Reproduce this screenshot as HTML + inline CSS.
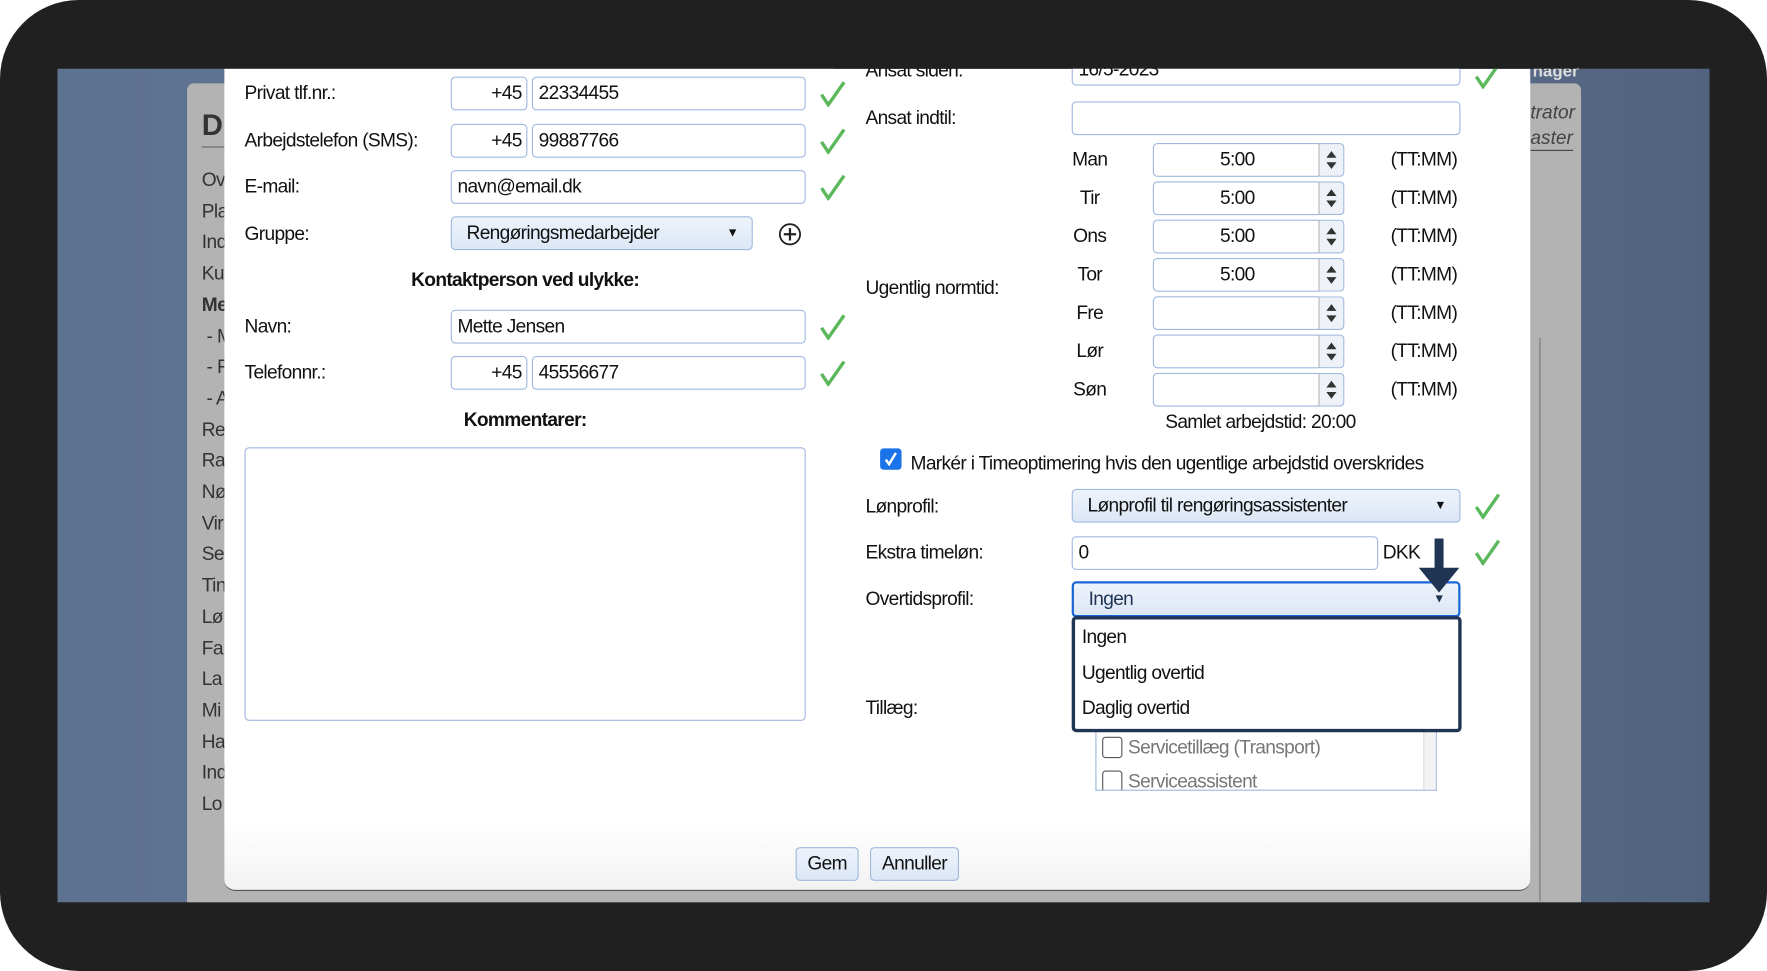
<!DOCTYPE html>
<html><head><meta charset="utf-8"><style>
*{box-sizing:border-box;margin:0;padding:0}
html,body{width:1767px;height:971px;overflow:hidden;background:#fff}
#w{position:absolute;left:0;top:0;width:1568px;height:862px;transform:scale(1.12691,1.12645);transform-origin:0 0;font-family:"Liberation Sans",sans-serif;color:#111}
.a{position:absolute}
.t{position:absolute;font-size:17px;line-height:20px;letter-spacing:-.6px;white-space:nowrap}
.in{position:absolute;height:30px;border:1px solid #9fb8e0;border-radius:4px;background:#fff;font-size:17px;letter-spacing:-.6px;line-height:28px;padding-left:5px;white-space:nowrap}
.sel{background:linear-gradient(#eef3fb,#dce7f6)}
.ck{position:absolute;width:24px;height:24px}
.sp{position:absolute;width:23px;height:30px;border:1px solid #9fb8e0;border-left:1px solid #b0b0b0;border-radius:0 4px 4px 0;background:#eef2f8}
.g{position:absolute;font-size:17px;color:#333;letter-spacing:-.5px}
</style></head><body><div id="w">
<div class="a" style="left:0;top:0;width:1568px;height:862px;background:#202020;border-radius:70px"></div>
<div class="a" style="left:51px;top:61px;width:1466px;height:740px;background:linear-gradient(90deg,#5d7190,#627895 50%,#52637f)"></div>
<div class="a" style="left:166px;top:74px;width:1237px;height:727px;background:#b3b3b3;border-radius:6px 6px 0 0"></div>
<div class="a" style="left:179px;top:96px;font-size:26px;font-weight:bold;color:#333">D</div>
<div class="a" style="left:179px;top:130px;width:20px;border-top:1px solid #666"></div>
<div class="g" style="left:179px;top:146px;line-height:27.7px">Ov<br>Pla<br>Ind<br>Ku<br><b>Me</b><br>&nbsp;- M<br>&nbsp;- F<br>&nbsp;- A<br>Re<br>Ra<br>Nø<br>Vir<br>Se<br>Tin<br>Lø<br>Fa<br>La<br>Mi<br>Ha<br>Ind<br>Lo</div>
<div class="a" style="left:1360px;top:55px;font-size:15px;font-weight:bold;color:#ddd">nager</div>
<div class="a" style="left:1358px;top:90px;font-size:17px;font-style:italic;color:#444">trator</div>
<div class="a" style="left:1358px;top:113px;font-size:17px;font-style:italic;color:#444;border-bottom:1px solid #444">aster</div>
<div class="a" style="left:1366px;top:300px;width:1px;height:500px;background:#777"></div>
<div class="a" style="left:199px;top:61px;width:1159px;height:730px;background:linear-gradient(#fff 92%,#f2f2f2);border-radius:0 0 10px 10px;border-bottom:1px solid #555"></div>
<div class="t" style="left:217px;top:73px">Privat tlf.nr.:</div>
<div class="in" style="left:400px;top:68px;width:68px;text-align:right;padding-right:4px">+45</div>
<div class="in" style="left:472px;top:68px;width:243px">22334455</div>
<div class="t" style="left:217px;top:115px">Arbejdstelefon (SMS):</div>
<div class="in" style="left:400px;top:110px;width:68px;text-align:right;padding-right:4px">+45</div>
<div class="in" style="left:472px;top:110px;width:243px">99887766</div>
<div class="t" style="left:217px;top:156px">E-mail:</div>
<div class="in" style="left:400px;top:151px;width:315px">navn@email.dk</div>
<div class="t" style="left:217px;top:198px">Gruppe:</div>
<div class="in sel" style="left:400px;top:192px;width:268px;padding-left:13px">Rengøringsmedarbejder<span style="position:absolute;right:12px;top:0;font-size:11px">▼</span></div>
<svg class="a" style="left:690px;top:197px" width="22" height="22"><circle cx="11" cy="11" r="9" fill="none" stroke="#222" stroke-width="1.6"/><path d="M11 5.5v11M5.5 11h11" stroke="#222" stroke-width="2"/></svg>
<div class="t" style="left:217px;top:239px;width:498px;text-align:center;font-weight:bold">Kontaktperson ved ulykke:</div>
<div class="t" style="left:217px;top:280px">Navn:</div>
<div class="in" style="left:400px;top:275px;width:315px">Mette Jensen</div>
<div class="t" style="left:217px;top:321px">Telefonnr.:</div>
<div class="in" style="left:400px;top:316px;width:68px;text-align:right;padding-right:4px">+45</div>
<div class="in" style="left:472px;top:316px;width:243px">45556677</div>
<div class="t" style="left:217px;top:363px;width:498px;text-align:center;font-weight:bold">Kommentarer:</div>
<div class="in" style="left:217px;top:397px;width:498px;height:243px"></div>
<svg class="ck" style="left:727px;top:71px"><path d="M2 13l6 9L22 2" fill="none" stroke="#5cb85c" stroke-width="3"/></svg>
<svg class="ck" style="left:727px;top:113px"><path d="M2 13l6 9L22 2" fill="none" stroke="#5cb85c" stroke-width="3"/></svg>
<svg class="ck" style="left:727px;top:154px"><path d="M2 13l6 9L22 2" fill="none" stroke="#5cb85c" stroke-width="3"/></svg>
<svg class="ck" style="left:727px;top:278px"><path d="M2 13l6 9L22 2" fill="none" stroke="#5cb85c" stroke-width="3"/></svg>
<svg class="ck" style="left:727px;top:319px"><path d="M2 13l6 9L22 2" fill="none" stroke="#5cb85c" stroke-width="3"/></svg>
<div class="in" style="left:951px;top:46px;width:345px;line-height:30px">16/5-2023</div>
<div class="t" style="left:768px;top:53px">Ansat siden:</div>
<svg class="ck" style="left:1308px;top:55px"><path d="M2 13l6 9L22 2" fill="none" stroke="#5cb85c" stroke-width="3"/></svg>
<div class="a" style="left:740px;top:0;width:660px;height:61px;background:#202020"></div>
<div class="t" style="left:768px;top:95px">Ansat indtil:</div>
<div class="in" style="left:951px;top:90px;width:345px"></div>
<div class="t" style="left:768px;top:246px">Ugentlig normtid:</div>
<div id="days"></div>
<div class="t" style="left:1034px;top:365px">Samlet arbejdstid: 20:00</div>
<div class="a" style="left:781px;top:398px;width:19px;height:19px;background:#1a73e8;border-radius:3px"></div>
<svg class="a" style="left:781px;top:398px" width="19" height="19"><path d="M5 10l3 4 6-10" fill="none" stroke="#fff" stroke-width="2.2"/></svg>
<div class="t" style="left:808px;top:402px">Markér i Timeoptimering hvis den ugentlige arbejdstid overskrides</div>
<div class="t" style="left:768px;top:440px">Lønprofil:</div>
<div class="in sel" style="left:951px;top:434px;width:345px;padding-left:13px">Lønprofil til rengøringsassistenter<span style="position:absolute;right:12px;top:0;font-size:11px">▼</span></div>
<svg class="ck" style="left:1308px;top:437px"><path d="M2 13l6 9L22 2" fill="none" stroke="#5cb85c" stroke-width="3"/></svg>
<div class="t" style="left:768px;top:481px">Ekstra timeløn:</div>
<div class="in" style="left:951px;top:476px;width:272px">0</div>
<div class="t" style="left:1227px;top:481px">DKK</div>
<svg class="ck" style="left:1308px;top:478px"><path d="M2 13l6 9L22 2" fill="none" stroke="#5cb85c" stroke-width="3"/></svg>
<div class="t" style="left:768px;top:522px">Overtidsprofil:</div>
<div class="in sel" style="left:951px;top:516px;width:345px;height:32px;border:2px solid #1a66d6;padding-left:13px;color:#1f3553">Ingen<span style="position:absolute;right:12px;top:0;font-size:11px;color:#1f3553">▼</span></div>
<svg class="a" style="left:1255px;top:478px" width="44" height="50"><path d="M18 0h8v26h14L22 48 4 26h14z" fill="#1f3553"/></svg>
<div class="t" style="left:768px;top:619px">Tillæg:</div>
<div class="a" style="left:972px;top:640px;width:303px;height:62px;border:1px solid #9fb8e0;border-top:none;background:#fff;overflow:hidden">
<div class="a" style="left:290px;top:0;width:12px;height:62px;background:#f3f3f3;border-left:1px solid #ddd"></div>
<div class="a" style="left:5px;top:14px;width:18px;height:19px;border:1.5px solid #555;border-radius:3px"></div>
<div class="t" style="left:28px;top:14px;color:#777">Servicetillæg (Transport)</div>
<div class="a" style="left:5px;top:44px;width:18px;height:19px;border:1.5px solid #555;border-radius:3px"></div>
<div class="t" style="left:28px;top:44px;color:#777">Serviceassistent</div>
</div>
<div class="a" style="left:951px;top:547px;width:346px;height:103px;border:3px solid #1f3553;border-radius:4px;background:#fff"></div>
<div class="t" style="left:960px;top:556px">Ingen</div>
<div class="t" style="left:960px;top:588px">Ugentlig overtid</div>
<div class="t" style="left:960px;top:619px">Daglig overtid</div>
<div class="in sel" style="left:706px;top:752px;width:56px;text-align:center;padding:0">Gem</div>
<div class="in sel" style="left:772px;top:752px;width:79px;text-align:center;padding:0">Annuller</div>
<script>
var d=["Man","Tir","Ons","Tor","Fre","Lør","Søn"],v=["5:00","5:00","5:00","5:00","","",""],h="";
for(var i=0;i<7;i++){var c=142+i*34;
h+='<div class="t" style="left:937px;width:60px;text-align:center;top:'+(c-10)+'px">'+d[i]+'</div>'+
'<div class="in" style="left:1023px;top:'+(c-15)+'px;width:150px;text-align:center;padding:0">'+v[i]+'</div>'+
'<div class="sp" style="left:1170px;top:'+(c-15)+'px"><svg width="21" height="28"><path d="M6 12l4.5-6 4.5 6zM6 16l4.5 6 4.5-6z" fill="#333"/></svg></div>'+
'<div class="t" style="left:1234px;top:'+(c-10)+'px">(TT:MM)</div>';}
document.getElementById("days").outerHTML=h;
</script>
</div></body></html>
